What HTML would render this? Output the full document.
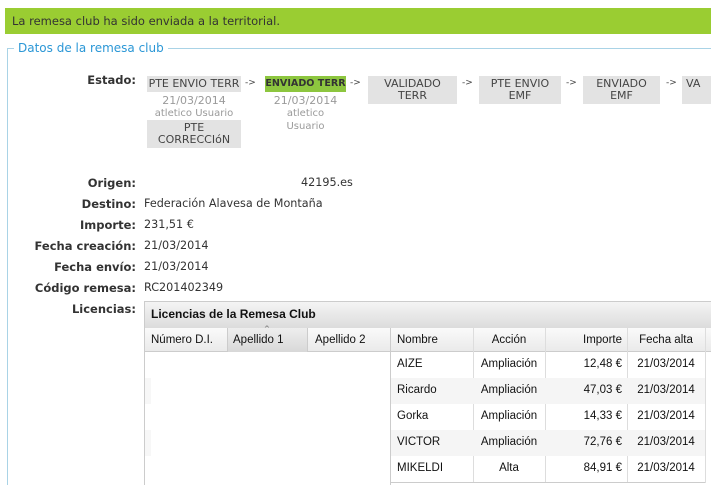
<!DOCTYPE html>
<html style="overflow:hidden;height:485px"><head><meta charset="utf-8"><style>
*{margin:0;padding:0;box-sizing:border-box}
body{width:711px;height:485px;overflow:hidden;background:#fff;position:relative;font-family:"DejaVu Sans",Verdana,sans-serif;font-size:11px;color:#333}
.a{position:absolute;white-space:nowrap}
.msg{left:5px;top:8px;width:706px;height:26px;background:#9acd32;padding:6px 0 0 7px;font-size:11.5px;color:#333}
.fs{left:7px;top:48px;width:710px;height:460px;border:1px solid #a9d3e6;border-right:none}
.lg{left:14px;top:41px;background:#fff;color:#2b97d6;padding:0 4px;font-size:12px}
.lab{right:575px;font-weight:bold;color:#333;font-size:11.5px}
.val{left:144px;font-size:11.2px}
.box{background:#e3e3e3;color:#444;font-size:11px;text-align:center;line-height:12px}
.arr{font-size:9px;color:#444}
.g{color:#9a9a9a;font-size:11px;text-align:center;line-height:12px}
.t{font-family:"Liberation Sans",Arial,sans-serif;font-size:11.5px;color:#111}
</style></head><body>
<div class="a msg">La remesa club ha sido enviada a la territorial.</div>
<div class="a fs"></div>
<div class="a lg">Datos de la remesa club</div>

<div class="a lab" style="top:73px">Estado:</div>
<div class="a box" style="left:147px;top:76px;width:94px;height:16px;padding-top:2px">PTE ENVIO TERR</div>
<div class="a arr" style="left:245px;top:78px">-&gt;</div>
<div class="a box" style="left:265px;top:76px;width:81px;height:16px;padding-top:2px;background:#8dc63f;color:#333;font-weight:bold;font-size:9.6px">ENVIADO TERR</div>
<div class="a arr" style="left:350px;top:78px">-&gt;</div>
<div class="a box" style="left:368px;top:76px;width:89px;height:28px;padding-top:2px">VALIDADO<br>TERR</div>
<div class="a arr" style="left:462px;top:78px">-&gt;</div>
<div class="a box" style="left:479px;top:76px;width:82px;height:28px;padding-top:2px">PTE ENVIO<br>EMF</div>
<div class="a arr" style="left:566px;top:78px">-&gt;</div>
<div class="a box" style="left:583px;top:76px;width:77px;height:28px;padding-top:2px">ENVIADO<br>EMF</div>
<div class="a arr" style="left:666px;top:78px">-&gt;</div>
<div class="a box" style="left:682px;top:76px;width:40px;height:28px;padding-top:2px;text-align:left;padding-left:4px">VA</div>
<div class="a g" style="left:147px;top:95px;width:94px">21/03/2014<br><span style="font-size:10px">atletico Usuario</span></div>
<div class="a g" style="left:265px;top:95px;width:81px">21/03/2014<br><span style="font-size:10px">atletico<br>Usuario</span></div>
<div class="a box" style="left:147px;top:120px;width:94px;height:28px;padding-top:2px">PTE<br>CORRECCIóN</div>

<div class="a lab" style="top:176px">Origen:</div><div class="a val" style="left:301px;top:176px">42195.es</div>
<div class="a lab" style="top:197px">Destino:</div><div class="a val" style="top:197px">Federación Alavesa de Montaña</div>
<div class="a lab" style="top:218px">Importe:</div><div class="a val" style="top:218px">231,51 €</div>
<div class="a lab" style="top:239px">Fecha creación:</div><div class="a val" style="top:239px">21/03/2014</div>
<div class="a lab" style="top:260px">Fecha envío:</div><div class="a val" style="top:260px">21/03/2014</div>
<div class="a lab" style="top:281px">Código remesa:</div><div class="a val" style="top:281px">RC201402349</div>
<div class="a lab" style="top:302px">Licencias:</div>

<div class="a" style="left:144px;top:301px;width:580px;height:200px;border:1px solid #ccc;background:#fff"></div>
<div class="a t" style="left:145px;top:302px;width:570px;height:26px;background:linear-gradient(#f4f4f4,#dcdcdc);font-weight:bold;font-size:12px;padding:5px 0 0 6px">Licencias de la Remesa Club</div>
<div class="a" style="left:145px;top:328px;width:570px;height:24px;background:linear-gradient(#fafafa,#eaeaea);border-bottom:1px solid #ccc"></div>
<div class="a" style="left:227px;top:328px;width:81px;height:24px;background:linear-gradient(#eee,#d8d8d8);border-left:1px solid #ccc;border-right:1px solid #ccc"></div>
<div class="a" style="left:264px;top:325px;font-size:7px;color:#666">^</div>
<div class="a t" style="left:151px;top:334px">Número D.I.</div>
<div class="a t" style="left:233px;top:334px">Apellido 1</div>
<div class="a t" style="left:315px;top:334px">Apellido 2</div>
<div class="a" style="left:390px;top:328px;width:1px;height:157px;background:#ccc"></div>
<div class="a t" style="left:397px;top:334px">Nombre</div>
<div class="a t" style="left:473px;top:334px;width:72px;text-align:center">Acción</div>
<div class="a t" style="left:545px;top:334px;width:77px;text-align:right">Importe</div>
<div class="a t" style="left:627px;top:334px;width:78px;text-align:center">Fecha alta</div>
<div class="a" style="left:473px;top:328px;width:1px;height:155px;background:#ddd"></div>
<div class="a" style="left:545px;top:328px;width:1px;height:155px;background:#ddd"></div>
<div class="a" style="left:627px;top:328px;width:1px;height:155px;background:#ddd"></div>
<div class="a" style="left:705px;top:328px;width:1px;height:155px;background:#ddd"></div>
<div class="a" style="left:391px;top:378px;width:314px;height:26px;background:#f5f5f5"></div>
<div class="a" style="left:391px;top:430px;width:314px;height:26px;background:#f5f5f5"></div>
<div class="a" style="left:145px;top:378px;width:6px;height:26px;background:#f7f7f7"></div>
<div class="a" style="left:145px;top:430px;width:6px;height:26px;background:#f7f7f7"></div>
<div class="a" style="left:391px;top:482px;width:314px;height:1px;background:#ccc"></div>

<div class="a t" style="left:397px;top:358px">AIZE</div><div class="a t" style="left:473px;top:358px;width:72px;text-align:center">Ampliación</div><div class="a t" style="left:545px;top:358px;width:77px;text-align:right">12,48 €</div><div class="a t" style="left:627px;top:358px;width:78px;text-align:center">21/03/2014</div>
<div class="a t" style="left:397px;top:384px">Ricardo</div><div class="a t" style="left:473px;top:384px;width:72px;text-align:center">Ampliación</div><div class="a t" style="left:545px;top:384px;width:77px;text-align:right">47,03 €</div><div class="a t" style="left:627px;top:384px;width:78px;text-align:center">21/03/2014</div>
<div class="a t" style="left:397px;top:410px">Gorka</div><div class="a t" style="left:473px;top:410px;width:72px;text-align:center">Ampliación</div><div class="a t" style="left:545px;top:410px;width:77px;text-align:right">14,33 €</div><div class="a t" style="left:627px;top:410px;width:78px;text-align:center">21/03/2014</div>
<div class="a t" style="left:397px;top:436px">VICTOR</div><div class="a t" style="left:473px;top:436px;width:72px;text-align:center">Ampliación</div><div class="a t" style="left:545px;top:436px;width:77px;text-align:right">72,76 €</div><div class="a t" style="left:627px;top:436px;width:78px;text-align:center">21/03/2014</div>
<div class="a t" style="left:397px;top:462px">MIKELDI</div><div class="a t" style="left:473px;top:462px;width:72px;text-align:center">Alta</div><div class="a t" style="left:545px;top:462px;width:77px;text-align:right">84,91 €</div><div class="a t" style="left:627px;top:462px;width:78px;text-align:center">21/03/2014</div>
</body></html>
